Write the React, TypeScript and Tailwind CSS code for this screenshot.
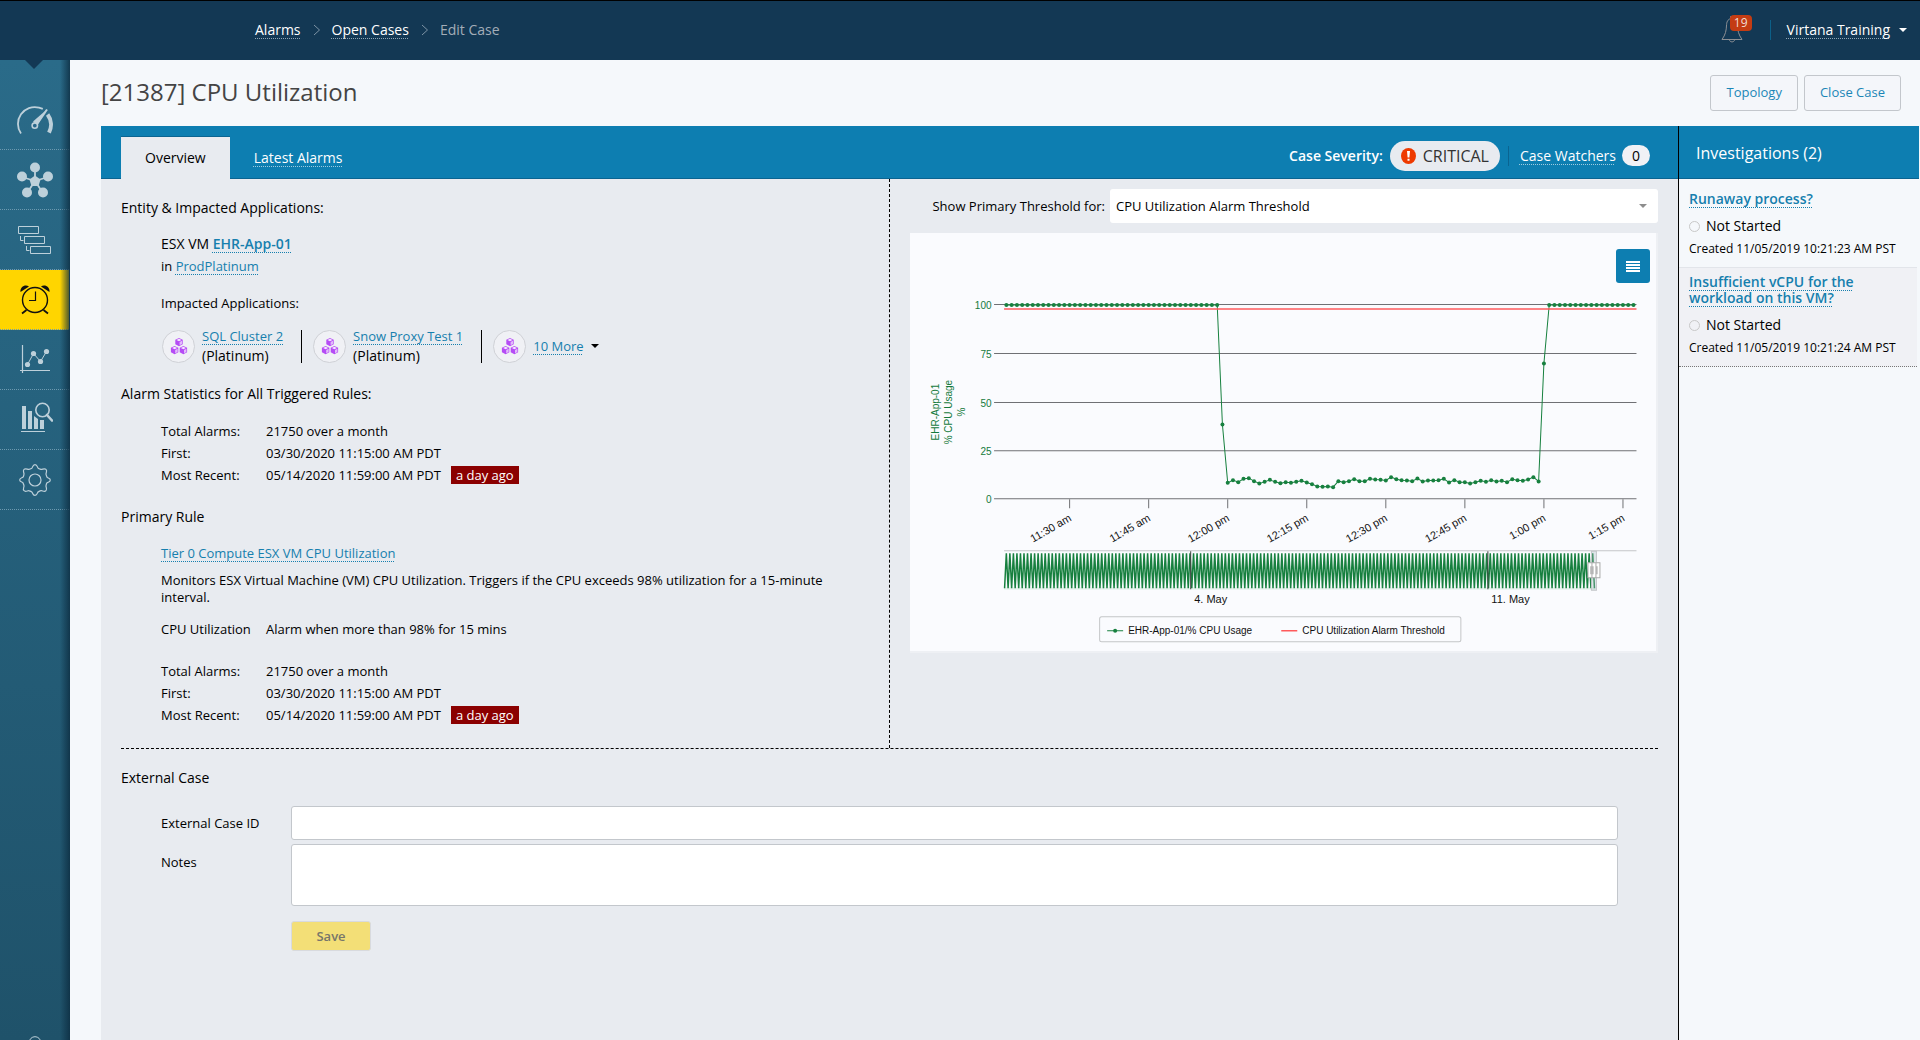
import React from "react"

const navItems = [
  { id: "dashboard", label: "Dashboard", active: false },
  { id: "inventory", label: "Inventory", active: false },
  { id: "topology", label: "Topology", active: false },
  { id: "alarms", label: "Alarms", active: true },
  { id: "reports", label: "Reports", active: false },
  { id: "analytics", label: "Analytics", active: false },
  { id: "settings", label: "Settings", active: false },
]

const apps = [
  { name: "SQL Cluster 2", tier: "(Platinum)" },
  { name: "Snow Proxy Test 1", tier: "(Platinum)" },
]

const investigations = [
  {
    title: "Runaway process?",
    status: "Not Started",
    created: "Created 11/05/2019 10:21:23 AM PST",
  },
  {
    title: "Insufficient vCPU for the workload on this VM?",
    status: "Not Started",
    created: "Created 11/05/2019 10:21:24 AM PST",
  },
]

// y of the samples from 12:00 to 12:59
const lowSamples = [
  249.7, 247, 249, 245.7, 245, 248, 250.3, 248.7, 246.7, 248.7, 250, 249, 249.7,
  248.7, 247.7, 249.3, 251, 253.3, 253.7, 253.3, 254, 248, 249, 248, 246, 248,
  248, 245.7, 246.3, 246.7, 247.3, 244, 246, 247, 247.3, 248, 245.3, 248.3,
  247.3, 247.3, 247, 245.7, 249.3, 247, 249, 249, 250.3, 249, 247.7, 248.7, 247,
  248.3, 247.7, 249, 246, 247, 247.7, 246.3, 244, 248.3,
]

const samples = [
  ...Array(41).fill(72),
  191.3,
  ...lowSamples,
  130.3,
  ...Array(17).fill(72),
]

const MINUTE = 79 / 15
const points = samples.map((y, i) => ({ x: 96.3 + i * MINUTE, y }))

const yTicks = [
  { label: "100", y: 71.5 },
  { label: "75", y: 120.5 },
  { label: "50", y: 169.5 },
  { label: "25", y: 217.5 },
  { label: "0", y: 265.5 },
]

const xTicks = [
  "11:30 am",
  "11:45 am",
  "12:00 pm",
  "12:15 pm",
  "12:30 pm",
  "12:45 pm",
  "1:00 pm",
  "1:15 pm",
]

const navigatorPath = () => {
  let d = "M94.5 355"
  for (let x = 94.5; x < 683; x += 3.53) {
    d += ` L${(x + 1.76).toFixed(2)} 320 L${(x + 3.53).toFixed(2)} 355`
  }
  return d
}

const NavIcon = ({ id }) => {
  if (id === "dashboard") {
    return (
      <svg width="36" height="36" viewBox="0 0 36 36" fill="none" stroke="#bdd0da" aria-hidden="true">
        <path d="M4 31.5A16.8 16.8 0 0 1 22 5.6l3.8 1.3" strokeWidth="1.8" />
        <path d="M30.6 12.5A17 17 0 0 1 32 30.6" strokeWidth="4" />
        <path d="M30 7.5 19.8 22.5" strokeWidth="2" />
        <path d="M30.4 7 16 19.5l4.6 3z" fill="#bdd0da" stroke="none" />
        <circle cx="17.8" cy="23.6" r="2.7" strokeWidth="1.6" fill="#28678a" />
      </svg>
    )
  }
  if (id === "inventory") {
    return (
      <svg width="36" height="36" viewBox="0 0 36 36" fill="#bdd0da" aria-hidden="true">
        <path d="M18 18V8M18 19 5 15M18 19l13-4M18 19l-8 12M18 19l8 12" stroke="#bdd0da" strokeWidth="1.8" />
        <path d="m18 13.5 5.5 4-2 6.5h-7l-2-6.5z" />
        <circle cx="18" cy="5.5" r="5" />
        <circle cx="5" cy="14.5" r="5" />
        <circle cx="31" cy="14.5" r="5" />
        <circle cx="10" cy="30.5" r="5" />
        <circle cx="26" cy="30.5" r="5" />
      </svg>
    )
  }
  if (id === "topology") {
    return (
      <svg width="36" height="36" viewBox="0 0 36 36" fill="none" stroke="#bdd0da" aria-hidden="true">
        <path d="M1.500 4.500h20v7h-20zM7.500 14.500h20v7h-20zM13.500 24.500h20v7h-20z" />
        <path d="M3.500 14v4.500h3M9.500 24v4.500h3" />
      </svg>
    )
  }
  if (id === "alarms") {
    return (
      <svg width="36" height="36" viewBox="0 0 36 36" fill="none" stroke="#111" aria-hidden="true">
        <circle cx="18" cy="18" r="12.500" strokeWidth="1.4" />
        <path d="M18.500 9.500v9h-6.500" strokeWidth="1.2" />
        <path d="m9.500 28-4.500 3.500M26.500 28l4.500 3.500" strokeWidth="1.8" />
        <path d="M3.500 10C3 5 8 2 12 4.500zM32.500 10C33 5 28 2 24 4.500z" fill="#111" stroke="none" />
      </svg>
    )
  }
  if (id === "reports") {
    return (
      <svg width="36" height="36" viewBox="0 0 36 36" fill="none" stroke="#bdd0da" aria-hidden="true">
        <path d="M5.500 3v28M3 28.500h30" strokeWidth="1.2" />
        <path d="m10.500 22.500 6-11 7 8 6-10" />
        <g fill="#bdd0da" stroke="none">
          <circle cx="10.500" cy="22.500" r="2.600" />
          <circle cx="16.500" cy="11.500" r="2.600" />
          <circle cx="23.500" cy="19.500" r="2.600" />
          <circle cx="29.500" cy="9.500" r="2.600" />
        </g>
      </svg>
    )
  }
  if (id === "analytics") {
    return (
      <svg width="36" height="36" viewBox="0 0 36 36" fill="#bdd0da" aria-hidden="true">
        <path d="M5 4h4v23H5zM11 9h4v18h-4zM17 14l4 3v10h-4zM23 18h4v9h-4zM4 29h24v1H4z" />
        <circle cx="25.500" cy="8" r="6.700" fill="#27647f" stroke="#bdd0da" strokeWidth="1.6" />
        <path d="m30 13 5 5.500" stroke="#bdd0da" strokeWidth="2.600" strokeLinecap="round" />
      </svg>
    )
  }
  return (
    <svg width="36" height="36" viewBox="0 0 36 36" fill="none" stroke="#bdd0da" strokeWidth="1.200" aria-hidden="true">
      <circle cx="18" cy="18" r="6" />
      <path d="M14.800 6.200C15.800 5.500 15.500 2.700 18 2.700s2.200 2.800 3.200 3.500 2 .8 3 1.200 3.200-1.700 4.800 0 -.2 3.600 0 4.800.7 2 1.100 3 3.200.6 3.200 2.800-2.200 2-3.200 2.800-.8 2-1.100 3 1.600 3.200 0 4.900-3.600-.2-4.800 0-2 .7-3 1.200-.7 3.400-3.200 3.400-2.200-2.700-3.200-3.400-2-.9-3-1.200-3.200 1.600-4.800 0 .2-3.600 0-4.900-.7-2-1.100-3S2.700 20.200 2.700 18s2.200-2 3.200-2.800.8-2 1.100-3-1.600-3.200 0-4.800 3.600.2 4.800 0 2-.6 3-1.200z" />
    </svg>
  )
}

const Chevron = () => (
  <svg width="8" height="12" viewBox="0 0 8 12" fill="none" stroke="#7d93a5" aria-hidden="true">
    <path d="m1 1 5.500 5L1 11" />
  </svg>
)

const AppBadge = () => (
  <span className="flex h-[33px] w-[33px] shrink-0 items-center justify-center rounded-full border border-[#cfd1d6] bg-[#f0f1f5]">
    <svg width="18" height="18" viewBox="0 0 18 18" fill="#b54cf5" aria-hidden="true">
      {[
        [9, 1],
        [4.6, 9],
        [13.4, 9],
      ].map(([x, y]) => (
        <g key={x} transform={`translate(${x} ${y})`}>
          <path d="M0 0 3.700 1.800v4.400L0 8.200l-3.700-2V1.800z" />
          <path d="M0 .8 2.500 2 0 3.200-2.500 2z" fill="#f6eaff" />
          <path d="M.6 4 3 2.800v3.100L.6 7.200z" fill="#e3bcfb" />
        </g>
      ))}
    </svg>
  </span>
)

const DottedLink = ({ children, className = "" }) => (
  <a
    href="#"
    className={`underline decoration-dotted decoration-1 underline-offset-[3px] [text-decoration-skip-ink:none] ${className}`}
  >
    {children}
  </a>
)

const AlarmStats = () => (
  <dl className="grid grid-cols-[105px_1fr] pl-10 text-[13px] leading-[22px]">
    <dt>Total Alarms:</dt>
    <dd>21750 over a month</dd>
    <dt>First:</dt>
    <dd>03/30/2020 11:15:00 AM PDT</dd>
    <dt>Most Recent:</dt>
    <dd className="flex items-center gap-[10px]">
      05/14/2020 11:59:00 AM PDT
      <span className="bg-[#8b0000] px-[5px] leading-[18px] text-white">a day ago</span>
    </dd>
  </dl>
)

const UsageChart = () => {
  const line = points.map((p) => `${p.x.toFixed(1)},${p.y}`).join(" ")
  return (
    <svg viewBox="0 0 748 420" className="block h-auto w-full font-['Liberation_Sans',Arial,sans-serif]" role="img" aria-label="CPU usage chart">
      {yTicks.map((t) => (
        <g key={t.label}>
          <path d={`M84 ${t.y}H726`} stroke="#6f7074" />
          <text x="81.500" y={t.y + 4} textAnchor="end" fontSize="10" fill="#147a3c">
            {t.label}
          </text>
        </g>
      ))}
      {xTicks.map((label, i) => (
        <g key={label}>
          <path d={`M${159.5 + i * 79} 266v9`} stroke="#6f7074" />
          <text
            transform={`translate(${162 + i * 79} 287) rotate(-30)`}
            textAnchor="end"
            fontSize="11"
            fill="#111"
          >
            {label}
          </text>
        </g>
      ))}
      <g fill="#147a3c" fontSize="10" textAnchor="middle">
        <text transform="translate(29 179) rotate(-90)">EHR-App-01</text>
        <text transform="translate(42 179) rotate(-90)">% CPU Usage</text>
        <text transform="translate(55 179) rotate(-90)">%</text>
      </g>

      <polyline points={line} fill="none" stroke="#17803f" />
      {points.map((p) => (
        <circle key={p.x} cx={p.x} cy={p.y} r="2" fill="#17803f" />
      ))}
      <path d="M94 76H726" stroke="#ff5a5c" strokeWidth="1.500" />

      {/* navigator */}
      <path d="M94 317.500H726" stroke="#c4c6c8" />
      <path d="M94 354h591v2.500H94z" fill="#e6f2ec" />
      <path d={navigatorPath()} fill="none" stroke="#17803f" strokeWidth="1.500" strokeLinejoin="bevel" />
      <path d="M280.500 318v38M577.500 318v38" stroke="#444" />
      <path d="M681 318h5v39h-5z" fill="#a9bcc4" fillOpacity=".35" stroke="#c3c6c9" />
      <path d="M681.500 329.500h8v15h-8zM677.500 329.500h8v15h-8z" fill="#fff" stroke="#aaa" />
      <path d="M680.500 333v8M682.500 333v8M686.500 333v8" stroke="#999" />
      <g fontSize="11" fill="#111">
        <text x="284" y="370">4. May</text>
        <text x="581" y="370">11. May</text>
      </g>

      <rect x="189.500" y="383.500" width="361" height="25" rx="2" fill="#fafbfe" stroke="#c4c6c8" />
      <path d="M197 397.500h16" stroke="#17803f" />
      <circle cx="205" cy="397.500" r="2" fill="#17803f" />
      <path d="M371 397.500h16" stroke="#ff5a5c" strokeWidth="1.500" />
      <g fontSize="10" fill="#111">
        <text x="218" y="401">EHR-App-01/% CPU Usage</text>
        <text x="392" y="401">CPU Utilization Alarm Threshold</text>
      </g>
    </svg>
  )
}

const Sidebar = () => (
  <nav className="relative flex w-[70px] shrink-0 flex-col bg-gradient-to-b from-[#2a6b89] to-[#1f526a] pt-[30px]">
    <svg width="18" height="9" className="absolute top-0 left-[25px]" aria-hidden="true">
      <path d="M0 0h18L9 9z" fill="#133854" />
    </svg>
    {navItems.map((item) => (
      <a
        key={item.id}
        href="#"
        aria-label={item.label}
        className={`mr-px flex h-[60px] items-center justify-center border-b border-dotted border-[#6d9ab0] ${
          item.active ? "bg-[#ffd500]" : ""
        }`}
      >
        <NavIcon id={item.id} />
      </a>
    ))}
    <a href="#" aria-label="Account" className="mt-auto flex h-1 justify-center overflow-hidden">
      <svg width="14" height="14" viewBox="0 0 14 14" fill="none" stroke="#bdd0da" aria-hidden="true">
        <circle cx="7" cy="6.500" r="5.800" />
      </svg>
    </a>
    <div className="pointer-events-none absolute inset-y-0 right-0 w-[10px] bg-gradient-to-r from-transparent to-[#0c2c40]/80" />
  </nav>
)

const Header = () => (
  <header className="flex h-[60px] items-center justify-between border-t border-black bg-[#133854] pr-[13px] pb-[2px] pl-[255px] text-sm text-white">
    <div className="flex items-center gap-3">
      <DottedLink className="decoration-[#8fa5b5]">Alarms</DottedLink>
      <Chevron />
      <DottedLink className="-ml-px decoration-[#8fa5b5]">Open Cases</DottedLink>
      <Chevron />
      <span className="-ml-px text-[#a3adb8]">Edit Case</span>
    </div>
    <div className="flex items-center">
      <button aria-label="Notifications" className="relative mr-[18px] h-[30px] w-[31px]">
        <svg width="22" height="28" viewBox="0 0 22 28" fill="none" stroke="#8c8f94" aria-hidden="true">
          <path d="M11 2.500c-3.500 0-5.200 2.500-5.400 6C5.300 15 4.500 18.500 1 23.500h20c-3.500-5-4.300-8.500-4.600-15-.2-3.500-1.900-6-5.400-6zM9.500 2V.5h3V2M8.300 23.500c.4 3.200 5 3.200 5.400 0" />
        </svg>
        <span className="absolute top-0 right-0 rounded bg-[#c43c13] px-1 text-xs leading-4 text-[#f0dcd5]">19</span>
      </button>
      <div className="h-5 border-l border-[#0c6088] pl-4" />
      <DottedLink className="decoration-[#8fa5b5]">Virtana Training</DottedLink>
      <svg width="8" height="4" className="ml-[9px]" aria-hidden="true">
        <path d="M0 0h8L4 4z" fill="#fff" />
      </svg>
    </div>
  </header>
)

const App = () => {
  return (
    <div className="flex h-screen min-h-[800px] flex-col overflow-hidden bg-[#f5f8fb] font-['Open_Sans',sans-serif] text-black">
      <Header />
      <div className="flex min-h-0 flex-1">
        <Sidebar />
        <main className="flex min-w-0 flex-1 flex-col pl-[31px]">
          <div className="flex h-[66px] shrink-0 items-center justify-between pr-[19px]">
            <h1 className="pb-[3px] text-2xl text-[#444]">[21387] CPU Utilization</h1>
            <div className="flex gap-[6px] text-[13px] text-[#1b86b7]">
              <button className="h-9 rounded-[3px] border border-[#c3c7cc] bg-[#f4f6fa] px-[15px]">Topology</button>
              <button className="h-9 rounded-[3px] border border-[#c3c7cc] bg-[#f4f6fa] px-[15px]">Close Case</button>
            </div>
          </div>

          <div className="mr-px flex min-h-0 flex-1">
            <section className="flex min-w-0 flex-1 flex-col bg-[#e8ebf0]">
              <div className="flex h-[53px] shrink-0 items-center justify-between border-b border-[#0a6491] bg-[#0d7eb1] pr-7 pl-5 text-sm text-white">
                <div className="flex h-full items-center">
                  <button className="-mb-[11px] h-[43px] border-t border-[#0a6491] bg-[#e8ebf0] px-6 text-black">
                    Overview
                  </button>
                  <DottedLink className="ml-6 pt-[11px] decoration-white/60">Latest Alarms</DottedLink>
                </div>
                <div className="flex items-center pt-[7px]">
                  <span className="font-semibold">Case Severity:</span>
                  <span className="ml-[7px] flex h-[30px] items-center gap-[7px] rounded-full bg-[#e8ebf0] px-[11px] text-base text-[#333]">
                    <svg width="15" height="16" viewBox="0 0 15 16" aria-hidden="true">
                      <ellipse cx="7.500" cy="8" rx="7.500" ry="8" fill="#ee3a00" />
                      <path d="M6 3h3l-.6 6.500H6.600zM6.500 10.700h2v2h-2z" fill="#fff" />
                    </svg>
                    CRITICAL
                  </span>
                  <span className="mx-2 h-5 border-l border-[#0a6491]" />
                  <DottedLink className="ml-[3px] decoration-white/60">Case Watchers</DottedLink>
                  <span className="ml-[6px] rounded-full bg-[#f0f1f5] px-[10px] leading-[21px] text-black">0</span>
                </div>
              </div>

              <div className="px-5">
                <div className="grid grid-cols-2 border-b border-dashed border-black">
                  <div className="border-r border-dashed border-black pt-[19px] pb-[22px]">
                    <h2 className="text-sm leading-5">Entity &amp; Impacted Applications:</h2>
                    <div className="pt-4 pl-10 text-[13px] leading-[22px]">
                      <p className="text-sm leading-5">
                        ESX VM <DottedLink className="font-semibold text-[#167fae]">EHR-App-01</DottedLink>
                      </p>
                      <p className="mt-px">
                        in <DottedLink className="text-[#167fae]">ProdPlatinum</DottedLink>
                      </p>
                      <p className="mt-[15px]">Impacted Applications:</p>
                      <ul className="mt-3 flex h-10 items-center gap-[11px] pl-px">
                        {apps.map((app) => (
                          <li key={app.name} className="flex items-center gap-[7px]">
                            <AppBadge />
                            <div className="leading-5">
                              <DottedLink className="text-[#167fae]">{app.name}</DottedLink>
                              <p className="text-sm leading-5">{app.tier}</p>
                            </div>
                            <span className="ml-[11px] h-[33px] border-l border-black" />
                          </li>
                        ))}
                        <li className="flex items-center gap-[7px]">
                          <AppBadge />
                          <DottedLink className="text-[#167fae]">10 More</DottedLink>
                          <svg width="8" height="4" aria-hidden="true">
                            <path d="M0 0h8L4 4z" />
                          </svg>
                        </li>
                      </ul>
                    </div>

                    <h2 className="mt-[18px] mb-4 text-sm leading-5">Alarm Statistics for All Triggered Rules:</h2>
                    <AlarmStats />

                    <h2 className="mt-[21px] text-sm leading-5">Primary Rule</h2>
                    <div className="pt-[15px] pr-8 pl-10 text-[13px] leading-[22px]">
                      <DottedLink className="text-[#167fae]">Tier 0 Compute ESX VM CPU Utilization</DottedLink>
                      <p className="mt-2 leading-[17px]">
                        Monitors ESX Virtual Machine (VM) CPU Utilization. Triggers if the CPU exceeds 98% utilization for a
                        15-minute interval.
                      </p>
                      <div className="mt-3 mb-5 flex">
                        <span className="w-[105px]">CPU Utilization</span>
                        <span>Alarm when more than 98% for 15 mins</span>
                      </div>
                    </div>
                    <AlarmStats />
                  </div>

                  <div className="pt-[10px] pl-5">
                    <div className="flex items-center justify-end text-[13px]">
                      <label htmlFor="threshold" className="mr-[5px] shrink-0 pt-[2px]">
                        Show Primary Threshold for:
                      </label>
                      <div className="relative flex w-[548px] min-w-0 items-center">
                        <select id="threshold" className="h-[34px] w-full appearance-none rounded-[3px] bg-white px-[6px] pt-[2px]">
                          <option>CPU Utilization Alarm Threshold</option>
                        </select>
                        <svg width="8" height="4" className="pointer-events-none absolute right-[11px]" aria-hidden="true">
                          <path d="M0 0h8L4 4z" fill="#8d8d8d" />
                        </svg>
                      </div>
                    </div>
                    <div className="relative mt-[10px] bg-[#fafbfe] shadow-[inset_-2px_-2px_0_#eef0f4]">
                      <UsageChart />
                      <button
                        aria-label="Chart menu"
                        className="absolute top-4 right-2 flex h-[34px] w-[34px] flex-col items-center justify-center gap-px rounded-[3px] bg-[#0d7eb1]"
                      >
                        <span className="h-[2px] w-[14px] bg-white" />
                        <span className="h-[2px] w-[14px] bg-white" />
                        <span className="h-[2px] w-[14px] bg-white" />
                        <span className="h-[2px] w-[14px] bg-white" />
                      </button>
                    </div>
                  </div>
                </div>

                <form className="pt-[19px] pr-10 text-[13px]" onSubmit={(e) => e.preventDefault()}>
                  <h2 className="text-sm leading-5">External Case</h2>
                  <div className="mt-[18px] flex items-center pl-10">
                    <label htmlFor="case-id" className="w-[130px] shrink-0 pt-[2px]">
                      External Case ID
                    </label>
                    <input id="case-id" type="text" className="h-[34px] w-full rounded-[3px] border border-[#c3c7cc] bg-white px-2" />
                  </div>
                  <div className="mt-1 flex pl-10">
                    <label htmlFor="notes" className="w-[130px] shrink-0 pt-[9px]">
                      Notes
                    </label>
                    <textarea id="notes" className="h-[62px] w-full resize-none rounded-[3px] border border-[#c3c7cc] bg-white px-2" />
                  </div>
                  <button
                    type="submit"
                    className="mt-[15px] ml-[170px] h-[30px] w-20 rounded-[3px] border border-[#d8dade] bg-[#f3df77] pt-[2px] font-semibold text-[#77766a]"
                  >
                    Save
                  </button>
                </form>
              </div>
            </section>

            <aside className="w-[241px] shrink-0 border-l border-black">
              <h2 className="flex h-[53px] items-center border-b border-[#0a6491] bg-[#0d7eb1] px-[17px] pt-[2px] text-base text-white">
                Investigations (2)
              </h2>
              <ul className="mr-[2px] pt-[6px]">
                {investigations.map((item) => (
                  <li
                    key={item.title}
                    className="border-b border-[#e2e5ea] px-[10px] pt-[6px] pb-2 last:border-dotted last:border-[#777] last:bg-[#f0f1f5]"
                  >
                    <p className="text-sm leading-4 font-semibold text-[#167fae]">
                      <DottedLink>{item.title}</DottedLink>
                    </p>
                    <p className="mt-[9px] flex items-center gap-[6px] text-sm leading-5">
                      <span className="h-[11px] w-[11px] rounded-full border border-[#c8c8c8]" />
                      {item.status}
                    </p>
                    <p className="mt-[3px] text-xs leading-5">{item.created}</p>
                  </li>
                ))}
              </ul>
            </aside>
          </div>
        </main>
      </div>
    </div>
  )
}

export default App
